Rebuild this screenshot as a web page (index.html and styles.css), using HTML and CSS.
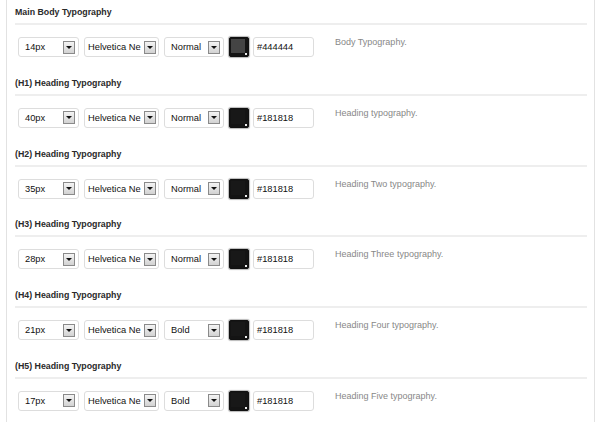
FILE: index.html
```html
<!DOCTYPE html>
<html>
<head>
    <meta charset="utf-8">
    <title>Typography</title>
    <link rel="stylesheet" href="styles.css">
</head>
<body>
<div class="panel">

    <div class="section">
        <h3>Main Body Typography</h3>
        <div class="row">
            <div class="select size"><span class="val">14px</span><span class="arrow"></span></div>
            <div class="select face"><span class="val">Helvetica Ne</span><span class="arrow"></span></div>
            <div class="select weight"><span class="val">Normal</span><span class="arrow"></span></div>
            <div class="swatch"><span class="fill" style="background:#444444"></span><span class="dot"></span></div>
            <div class="hex">#444444</div>
            <p class="desc">Body Typography.</p>
        </div>
    </div>

    <div class="section">
        <h3>(H1) Heading Typography</h3>
        <div class="row">
            <div class="select size"><span class="val">40px</span><span class="arrow"></span></div>
            <div class="select face"><span class="val">Helvetica Ne</span><span class="arrow"></span></div>
            <div class="select weight"><span class="val">Normal</span><span class="arrow"></span></div>
            <div class="swatch"><span class="fill" style="background:#181818"></span><span class="dot"></span></div>
            <div class="hex">#181818</div>
            <p class="desc">Heading typography.</p>
        </div>
    </div>

    <div class="section">
        <h3>(H2) Heading Typography</h3>
        <div class="row">
            <div class="select size"><span class="val">35px</span><span class="arrow"></span></div>
            <div class="select face"><span class="val">Helvetica Ne</span><span class="arrow"></span></div>
            <div class="select weight"><span class="val">Normal</span><span class="arrow"></span></div>
            <div class="swatch"><span class="fill" style="background:#181818"></span><span class="dot"></span></div>
            <div class="hex">#181818</div>
            <p class="desc">Heading Two typography.</p>
        </div>
    </div>

    <div class="section">
        <h3>(H3) Heading Typography</h3>
        <div class="row">
            <div class="select size"><span class="val">28px</span><span class="arrow"></span></div>
            <div class="select face"><span class="val">Helvetica Ne</span><span class="arrow"></span></div>
            <div class="select weight"><span class="val">Normal</span><span class="arrow"></span></div>
            <div class="swatch"><span class="fill" style="background:#181818"></span><span class="dot"></span></div>
            <div class="hex">#181818</div>
            <p class="desc">Heading Three typography.</p>
        </div>
    </div>

    <div class="section">
        <h3>(H4) Heading Typography</h3>
        <div class="row">
            <div class="select size"><span class="val">21px</span><span class="arrow"></span></div>
            <div class="select face"><span class="val">Helvetica Ne</span><span class="arrow"></span></div>
            <div class="select weight"><span class="val">Bold</span><span class="arrow"></span></div>
            <div class="swatch"><span class="fill" style="background:#181818"></span><span class="dot"></span></div>
            <div class="hex">#181818</div>
            <p class="desc">Heading Four typography.</p>
        </div>
    </div>

    <div class="section">
        <h3>(H5) Heading Typography</h3>
        <div class="row">
            <div class="select size"><span class="val">17px</span><span class="arrow"></span></div>
            <div class="select face"><span class="val">Helvetica Ne</span><span class="arrow"></span></div>
            <div class="select weight"><span class="val">Bold</span><span class="arrow"></span></div>
            <div class="swatch"><span class="fill" style="background:#181818"></span><span class="dot"></span></div>
            <div class="hex">#181818</div>
            <p class="desc">Heading Five typography.</p>
        </div>
    </div>

</div>
</body>
</html>
```

FILE: styles.css
```css
*{
    margin: 0;
    padding: 0;
    box-sizing: border-box;
}
body{
    font-family: "Liberation Sans", Arial, sans-serif;
    color: #333;
    background: #fff;
}
.panel{
    margin-left: 6px;
    width: 589px;
    min-height: 422px;
    padding: 5px 7px 0 8px;
    border-left: 1px solid #e2e2e2;
    border-right: 1px solid #e2e2e2;
}
.section{
    margin-bottom: 18.8px;
}
.section h3{
    font-size: 8.8px;
    line-height: 14px;
    font-weight: bold;
    color: #2a2a2a;
    padding-bottom: 4px;
    border-bottom: 2px solid #eee;
}
.row{
    display: flex;
    align-items: center;
    margin-top: 12px;
    padding-left: 3px;
    height: 20px;
    font-size: 9.3px;
    color: #111;
}
.select{
    display: flex;
    align-items: center;
    height: 20px;
    margin-right: 5px;
    padding: 0 3px 0 6px;
    border: 1px solid #ddd;
    border-radius: 3px;
    background: #fff;
}
.select.size{
    width: 61px;
}
.select.face{
    width: 75px;
    padding: 0 2px 0 3px;
}
.select.weight{
    width: 60px;
}
.select .val{
    flex: 1;
    white-space: nowrap;
}
.select .arrow{
    position: relative;
    flex: none;
    width: 12px;
    height: 13px;
    border: 1px solid #8a8a8a;
    background: linear-gradient(to bottom, #f4f4f4, #d2d2d2);
}
.select .arrow:after{
    content: "";
    position: absolute;
    left: 2px;
    top: 4px;
    border-left: 3px solid transparent;
    border-right: 3px solid transparent;
    border-top: 3px solid #111;
}
.swatch{
    position: relative;
    width: 20px;
    height: 20px;
    margin-right: 4px;
    background: #141414;
    border: 1px solid #111;
    border-radius: 2px;
    box-shadow: 0 0 1px 1px #b8b8b8;
}
.swatch .fill{
    position: absolute;
    left: 1px;
    top: 1px;
    right: 3px;
    bottom: 3px;
}
.swatch .dot{
    position: absolute;
    right: 1px;
    bottom: 1px;
    width: 2px;
    height: 2px;
    background: #eee;
}
.hex{
    display: flex;
    align-items: center;
    width: 61px;
    height: 20px;
    padding-left: 3px;
    border: 1px solid #ddd;
    border-radius: 3px;
}
.desc{
    align-self: flex-start;
    margin: 0 0 0 21px;
    font-size: 9px;
    line-height: 11px;
    color: #888;
}
```
